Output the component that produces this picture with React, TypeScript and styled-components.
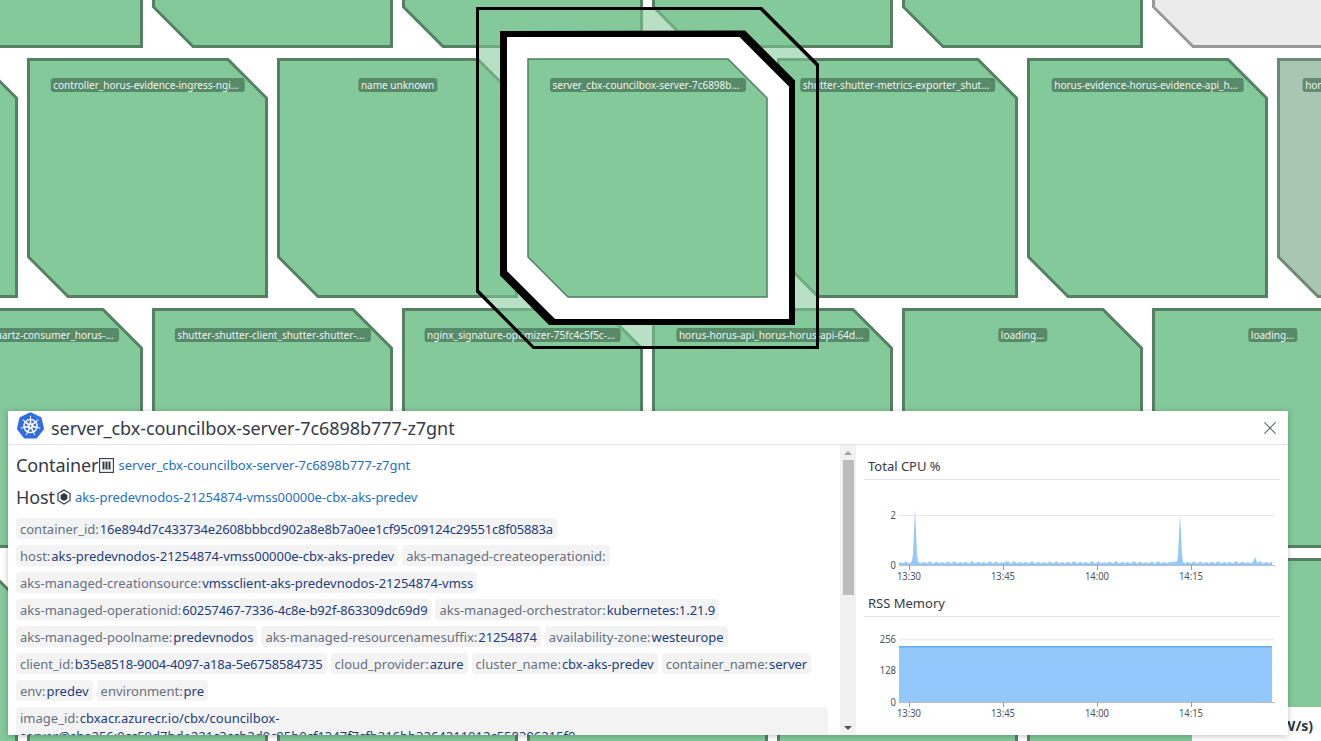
import React from 'react';
import styled, { createGlobalStyle } from 'styled-components';
import { SiKubernetes } from 'react-icons/si';

type Tone = 'ok' | 'muted' | 'empty';

type HostNode = {
  x: number;
  y: number;
  label?: string;
  tone?: Tone;
};

const toneFill: Record<Tone, string> = { ok: '#83c99a', muted: '#a8c6b2', empty: '#ebebeb' };
const toneStroke: Record<Tone, string> = { ok: '#548161', muted: '#6b8a76', empty: '#999999' };

const nodes: HostNode[] = [
  { x: -98, y: -192 },
  { x: 152, y: -192 },
  { x: 402, y: -192 },
  { x: 652, y: -192 },
  { x: 902, y: -192 },
  { x: 1152, y: -192, tone: 'empty' },
  { x: -223, y: 58 },
  { x: 27, y: 58, label: 'controller_horus-evidence-ingress-ngi...' },
  { x: 277, y: 58, label: 'name unknown' },
  { x: 777, y: 58, label: 'shutter-shutter-metrics-exporter_shut...' },
  { x: 1027, y: 58, label: 'horus-evidence-horus-evidence-api_h...' },
  { x: 1277, y: 58, label: 'horus-horus-worker_horus-horus-wo...', tone: 'muted' },
  { x: -98, y: 308, label: 'horus-horus-quartz-consumer_horus-...' },
  { x: 152, y: 308, label: 'shutter-shutter-client_shutter-shutter-...' },
  { x: 402, y: 308, label: 'nginx_signature-optimizer-75fc4c5f5c-...' },
  { x: 652, y: 308, label: 'horus-horus-api_horus-horus-api-64d...' },
  { x: 902, y: 308, label: 'loading...' },
  { x: 1152, y: 308, label: 'loading...' },
  { x: -223, y: 558 },
  { x: 27, y: 558 },
  { x: 277, y: 558 },
  { x: 527, y: 558 },
  { x: 777, y: 558 },
  { x: 1027, y: 558 },
  { x: 1277, y: 558 },
];

// tight: the reference draws digits a bit narrower than this font does
const tags: { name: string; value: string; tight?: number }[] = [
  { name: 'container_id', value: '16e894d7c433734e2608bbbcd902a8e8b7a0ee1cf95c09124c29551c8f05883a', tight: 0.19 },
  { name: 'host', value: 'aks-predevnodos-21254874-vmss00000e-cbx-aks-predev', tight: 0.03 },
  { name: 'aks-managed-createoperationid', value: '' },
  { name: 'aks-managed-creationsource', value: 'vmssclient-aks-predevnodos-21254874-vmss', tight: 0.03 },
  { name: 'aks-managed-operationid', value: '60257467-7336-4c8e-b92f-863309dc69d9', tight: 0.16 },
  { name: 'aks-managed-orchestrator', value: 'kubernetes:1.21.9', tight: 0.06 },
  { name: 'aks-managed-poolname', value: 'predevnodos' },
  { name: 'aks-managed-resourcenamesuffix', value: '21254874', tight: 0.12 },
  { name: 'availability-zone', value: 'westeurope' },
  { name: 'client_id', value: 'b35e8518-9004-4097-a18a-5e6758584735', tight: 0.19 },
  { name: 'cloud_provider', value: 'azure' },
  { name: 'cluster_name', value: 'cbx-aks-predev' },
  { name: 'container_name', value: 'server' },
  { name: 'env', value: 'predev' },
  { name: 'environment', value: 'pre' },
  {
    name: 'image_id',
    value: 'cbxacr.azurecr.io/cbx/councilbox-server@sha256:9cc50d7bde221c3ccb2d9c95b0cf1347f7cfb216bb3264211012c558396215f9',
  },
];

const timeTicks = [
  { x: 909, label: '13:30' },
  { x: 1003, label: '13:45' },
  { x: 1097, label: '14:00' },
  { x: 1191, label: '14:15' },
];

const cpuSpikes = [
  { x: 915, h: 56, w: 2.5 },
  { x: 1180, h: 51, w: 2.5 },
  { x: 1255, h: 8, w: 3 },
  { x: 972, h: 4.5, w: 2 },
  { x: 1006, h: 4.5, w: 2 },
  { x: 1173, h: 4.5, w: 2 },
];

// small repeating noise with a few spikes, close enough to the cpu series
const cpuArea = () => {
  const points: string[] = ['899,565'];
  for (let x = 899; x <= 1272; x += 1) {
    const phase = Math.abs(((x % 6) / 6) * 2 - 1);
    let h = 1.4 + phase * (1.2 + Math.abs(Math.sin(x * 0.37)) * 1.4);
    cpuSpikes.forEach((spike) => {
      h = Math.max(h, spike.h * (1 - Math.abs(x - spike.x) / spike.w));
    });
    points.push(`${x},${565 - h}`);
  }
  points.push('1272,565');
  return points.join(' ');
};

const GlobalStyle = createGlobalStyle`
  html, body {
    margin: 0;
    padding: 0;
    height: 100%;
    overflow: hidden;
    background: #ffffff;
    font-family: 'Noto Sans', sans-serif;
  }
`;

const Page = styled.div`
  position: relative;
  width: 1321px;
  height: 741px;
  overflow: hidden;
`;

const Node = styled.div<{ $x: number; $y: number; $front?: boolean }>`
  position: absolute;
  left: ${({ $x }) => $x}px;
  top: ${({ $y }) => $y}px;
  width: 241px;
  height: 240px;
  ${({ $front }) => ($front ? 'z-index: 4;' : '')}
`;

const NodeShape = styled.svg`
  display: block;
  width: 241px;
  height: 240px;
`;

const NodeLabel = styled.span<{ $clipped: boolean }>`
  position: absolute;
  z-index: 2;
  top: 20px;
  left: 50%;
  transform: translateX(-50%);
  height: 14px;
  padding: 0 ${({ $clipped }) => ($clipped ? '6px' : '3px')} 0 3px;
  border-radius: 3px;
  background: rgba(60, 100, 75, 0.62);
  color: #eef5f0;
  font-size: 10px;
  line-height: 14px;
  white-space: nowrap;
`;

const HaloLayer = styled.svg<{ $z: number }>`
  position: absolute;
  left: 0;
  top: 0;
  width: 1321px;
  height: 741px;
  z-index: ${({ $z }) => $z};
  pointer-events: none;
`;

const Legend = styled.div`
  position: absolute;
  right: 0;
  bottom: 0;
  width: 129px;
  height: 34px;
  padding-right: 8px;
  box-sizing: border-box;
  background: #ffffff;
  color: #2c3340;
  font-size: 14px;
  font-weight: 700;
  line-height: 37px;
  text-align: right;
  white-space: nowrap;
  z-index: 5;
`;

const Modal = styled.div`
  position: absolute;
  left: 8px;
  top: 411px;
  width: 1280px;
  height: 324px;
  display: flex;
  flex-direction: column;
  background: #ffffff;
  box-shadow: 0 1px 6px rgba(0, 0, 0, 0.25);
  z-index: 6;
`;

const ModalHeader = styled.div`
  flex: none;
  display: flex;
  align-items: center;
  height: 33px;
  padding: 0 12px 0 9px;
  border-bottom: 1px solid #e2e4ee;
  color: #333a45;

  & > svg:first-child {
    margin: 0 0 5px -0.5px;
  }
`;

const ModalTitle = styled.div`
  flex: 1;
  margin: 1px 0 0 7.5px;
  font-size: 18px;
  line-height: 33px;
  letter-spacing: -0.06px;
`;

const CloseIcon = styled.svg`
  width: 12px;
  height: 12px;
  stroke: #5c6470;
  stroke-width: 1.2;
`;

const ModalBody = styled.div`
  flex: 1;
  min-height: 0;
  display: flex;
`;

const DetailsPane = styled.div`
  width: 832px;
  padding: 8px 12px 0 8px;
  box-sizing: border-box;
  overflow: hidden;
`;

const HeadingRow = styled.div`
  display: flex;
  align-items: center;
  height: 24px;
  margin-bottom: 8px;
`;

const Heading = styled.span`
  color: #333a45;
  font-size: 18px;
  line-height: 24px;
  letter-spacing: -0.1px;
`;

const HeadingIcon = styled.svg<{ $lead: number }>`
  flex: none;
  margin: 0 4px 0 ${({ $lead }) => $lead}px;
`;

const HeadingLink = styled.a`
  color: #1f6fc1;
  font-size: 13px;
  line-height: 24px;
  letter-spacing: -0.04px;
  text-decoration: none;
`;

const TagList = styled.div`
  display: flex;
  flex-wrap: wrap;
  gap: 6px 4px;
  margin-top: 9px;
`;

const Tag = styled.div`
  max-width: 100%;
  box-sizing: border-box;
  padding: 1.5px 4px;
  border-radius: 4px;
  background: #f3f3f4;
  font-size: 13px;
  line-height: 18px;
`;

const TagName = styled.span`
  color: #667080;
  margin-right: 1px;
`;

const TagValue = styled.span<{ $tight?: number }>`
  color: #1c3d7c;
  letter-spacing: ${({ $tight }) => -($tight ?? 0)}px;
`;

const ScrollTrack = styled.div`
  flex: none;
  width: 16px;
  display: flex;
  flex-direction: column;
  align-items: center;
  background: #f1f1f1;
`;

const ScrollArrow = styled.div<{ $down?: boolean }>`
  flex: none;
  width: 0;
  height: 0;
  margin: ${({ $down }) => ($down ? 'auto 0 5px' : '6px 0 0')};
  border-left: 4px solid transparent;
  border-right: 4px solid transparent;
  ${({ $down }) => ($down ? 'border-top: 4px solid #50565c;' : 'border-bottom: 4px solid #a3a3a3;')}
`;

const ScrollThumb = styled.div`
  flex: none;
  width: 11px;
  height: 135px;
  margin-top: 5px;
  background: #bcbcbc;
`;

const MetricsPane = styled.div`
  flex: 1;
  min-width: 0;
  padding: 11px 8px 0;
`;

const MetricTitle = styled.div`
  height: 23px;
  padding-left: 4px;
  border-bottom: 1px solid #e2e4ee;
  color: #333a45;
  font-size: 13px;
  line-height: 21px;
`;

const MetricChart = styled.svg<{ $h: number }>`
  display: block;
  width: 416px;
  height: ${({ $h }) => $h}px;
  font-family: 'Noto Sans', sans-serif;
  font-size: 11.5px;
  fill: #4a5160;
`;

const outline = '1.5,1.5 201,1.5 239.5,40 239.5,238.5 41,238.5 1.5,199';
const thinOutline = '1,1 201,1 240,40 240,239 41,239 1,199';
const ringInner = '479,10 760,10 816,66 816,346 534,346 479,290';
const ringPath = 'M476 7H762L819 64V349H533L476 292ZM479 10V290L534 346H816V66L760 10Z';
const bandOuter = '500,31 745,30.5 795,80.5 795,325 549,325 500,275.5';
const bandInner = '507,37 739.6,37 789,86.4 789,319 555,319 507,271';

const TimeAxis: React.FC<{ base: number }> = ({ base }) => (
  <>
    <line x1="899" x2="1275" y1={base + 0.5} y2={base + 0.5} stroke="#bdbdbd" />
    {timeTicks.map((tick) => (
      <g key={tick.label}>
        <line x1={tick.x + 0.5} x2={tick.x + 0.5} y1={base} y2={base + 5} stroke="#9a9a9a" />
        <text x={tick.x - 12} y={base + 15} textLength="24" lengthAdjust="spacingAndGlyphs">
          {tick.label}
        </text>
      </g>
    ))}
  </>
);

const YLabel: React.FC<{ y: number; text: string }> = ({ y, text }) => (
  <text
    x={896 - text.length * 5.4}
    y={y + 4}
    textLength={text.length * 5.4}
    lengthAdjust="spacingAndGlyphs"
  >
    {text}
  </text>
);

const App: React.FC = () => {
  return (
    <Page>
      <GlobalStyle />
      {nodes.map((node) => {
        const tone = node.tone ?? 'ok';
        return (
          <Node key={`${node.x}-${node.y}`} $x={node.x} $y={node.y}>
            <NodeShape viewBox="0 0 241 240">
              <polygon points={outline} fill={toneFill[tone]} stroke={toneStroke[tone]} strokeWidth="3" />
            </NodeShape>
            {node.label && <NodeLabel $clipped={node.label.length > 20}>{node.label}</NodeLabel>}
          </Node>
        );
      })}

      <HaloLayer $z={1} viewBox="0 0 1321 741">
        <polygon points={ringInner} fill="#83c99a" fillOpacity="0.58" />
      </HaloLayer>
      <HaloLayer $z={3} viewBox="0 0 1321 741">
        <path d={ringPath} fill="#000000" fillRule="evenodd" />
        <polygon points={bandOuter} fill="#000000" />
        <polygon points={bandInner} fill="#ffffff" />
      </HaloLayer>

      <Node $x={527} $y={58} $front>
        <NodeShape viewBox="0 0 241 240">
          <polygon points={thinOutline} fill="#83c99a" stroke="#4f7d5f" strokeWidth="1.5" />
        </NodeShape>
        <NodeLabel $clipped>server_cbx-councilbox-server-7c6898b...</NodeLabel>
      </Node>

      <Legend>Power (W/s)</Legend>

      <Modal>
        <ModalHeader>
          <SiKubernetes size={27} color="#326ce5" />
          <ModalTitle>server_cbx-councilbox-server-7c6898b777-z7gnt</ModalTitle>
          <CloseIcon viewBox="0 0 12 12">
            <path d="M0.4 0.4 11.6 11.6M11.6 0.4 0.4 11.6" fill="none" />
          </CloseIcon>
        </ModalHeader>
        <ModalBody>
          <DetailsPane>
            <HeadingRow>
              <Heading>Container</Heading>
              <HeadingIcon $lead={1} width="15" height="15" viewBox="0 0 15 15">
                <rect x="0.6" y="0.6" width="13.8" height="13.8" fill="none" stroke="#333a45" strokeWidth="1.1" />
                <path d="M3.5 3.5h2v8h-2zM6.5 3.5h2v8h-2zM9.5 3.5h2v8h-2z" fill="#333a45" />
              </HeadingIcon>
              <HeadingLink>server_cbx-councilbox-server-7c6898b777-z7gnt</HeadingLink>
            </HeadingRow>
            <HeadingRow>
              <Heading>Host</Heading>
              <HeadingIcon $lead={2} width="14" height="16" viewBox="0 0 14 16">
                <path d="M7 1 13 4.5v7L7 15 1 11.5v-7z" fill="none" stroke="#333a45" strokeWidth="1.2" />
                <path d="M7 4 10.4 6v4L7 12 3.6 10V6z" fill="#333a45" />
              </HeadingIcon>
              <HeadingLink>aks-predevnodos-21254874-vmss00000e-cbx-aks-predev</HeadingLink>
            </HeadingRow>
            <TagList>
              {tags.map((tag) => (
                <Tag key={tag.name}>
                  <TagName>{tag.name}:</TagName>
                  <TagValue $tight={tag.tight}>{tag.value}</TagValue>
                </Tag>
              ))}
            </TagList>
          </DetailsPane>
          <ScrollTrack>
            <ScrollArrow />
            <ScrollThumb />
            <ScrollArrow $down />
          </ScrollTrack>
          <MetricsPane>
            <MetricTitle>Total CPU %</MetricTitle>
            <MetricChart $h={113} viewBox="864 480 416 113">
              <line x1="899" x2="1275" y1="515.5" y2="515.5" stroke="#e8e8ee" />
              <polygon points={cpuArea()} fill="#93c8fc" />
              <TimeAxis base={565} />
              <YLabel y={515} text="2" />
              <YLabel y={565} text="0" />
            </MetricChart>
            <MetricTitle>RSS Memory</MetricTitle>
            <MetricChart $h={118} viewBox="864 617 416 118">
              <line x1="899" x2="1275" y1="639.5" y2="639.5" stroke="#f0f0f2" strokeWidth="2" />
              <line x1="899" x2="1275" y1="671" y2="671" stroke="#f3f3f5" />
              <rect x="899" y="646" width="373" height="56" fill="#93c8fc" />
              <line x1="899" x2="1272" y1="646.7" y2="646.7" stroke="#5eabf8" strokeWidth="1.4" />
              <TimeAxis base={702} />
              <YLabel y={639} text="256" />
              <YLabel y={670} text="128" />
              <YLabel y={702} text="0" />
            </MetricChart>
          </MetricsPane>
        </ModalBody>
      </Modal>
    </Page>
  );
};

export default App;
